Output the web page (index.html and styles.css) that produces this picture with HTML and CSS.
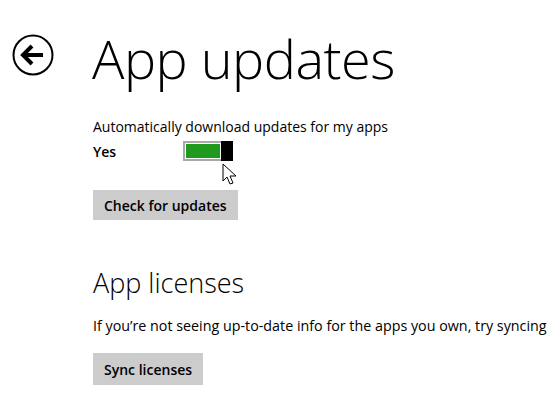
FILE: index.html
```html
<!DOCTYPE html>
<html>
<head>
    <link rel="stylesheet" href="styles.css">
</head>
<body>
    <div class="page-header">
        <button class="back-button" aria-label="Back">
            <svg width="42" height="42" viewBox="0 0 42 42">
                <circle cx="21" cy="21" r="19.5" fill="none" stroke="#000" stroke-width="2"/>
                <path d="M11 21 H31" stroke="#000" stroke-width="4" fill="none"/>
                <path d="M20 12 L11 21 L20 30" stroke="#000" stroke-width="4" fill="none" stroke-linejoin="miter"/>
            </svg>
        </button>
        <h1 class="page-title">App updates</h1>
    </div>

    <div class="content">
        <section class="setting">
            <div class="setting-label">Automatically download updates for my apps</div>
            <div class="toggle-row">
                <span class="toggle-state">Yes</span>
                <div class="toggle on">
                    <div class="toggle-track"><div class="toggle-fill"></div></div>
                    <div class="toggle-thumb"></div>
                    <!-- mouse pointer resting over the switch -->
                    <svg class="pointer" width="16" height="24" viewBox="0 0 16 24">
                        <path d="M1 1 L1 18 L5 14 L8 21 L11 20 L8 13 L14 13 Z" fill="#fff" stroke="#000" stroke-width="1" stroke-linejoin="round"/>
                    </svg>
                </div>
            </div>
            <button class="action-button">Check for updates</button>
        </section>

        <section class="setting licenses">
            <h2 class="section-title">App licenses</h2>
            <p class="section-text">If you’re not seeing up-to-date info for the apps you own, try syncing</p>
            <button class="action-button">Sync licenses</button>
        </section>
    </div>
</body>
</html>
```

FILE: styles.css
```css
body {
    margin: 0;
    background: #ffffff;
    color: #000;
    font-family: "Open Sans", "Liberation Sans", sans-serif;
    overflow: hidden;
}

.page-header {
    display: flex;
    align-items: flex-start;
    padding: 16px 0 0 12px;
    height: 70px;
}

.back-button {
    width: 42px;
    height: 42px;
    padding: 0;
    border: none;
    background: none;
    margin: 18px 38px 0 0;
}

.back-button svg {
    display: block;
}

.page-title {
    margin: 15px 0 0;
    font-size: 54px;
    font-weight: 300;
    letter-spacing: -0.5px;
    line-height: 1;
}

.content {
    padding: 32px 0 0 93px;
}

.setting-label {
    font-size: 14px;
    line-height: 18px;
}

.toggle-row {
    display: flex;
    align-items: center;
    height: 22px;
    margin-top: 4px;
}

.toggle-state {
    font-size: 14px;
    font-weight: 600;
    width: 90px;
}

.toggle {
    position: relative;
    display: flex;
    width: 50px;
    height: 20px;
}

.toggle-track {
    flex: 1;
    border: 2px solid #a8a8a8;
    border-right: none;
    padding: 1px;
    background: #fff;
}

.toggle-fill {
    height: 100%;
    background: #1f9a1f;
}

.toggle-thumb {
    width: 12px;
    background: #000;
}

.pointer {
    position: absolute;
    left: 39px;
    top: 22px;
}

.action-button {
    display: block;
    margin-top: 28px;
    padding: 0 11px;
    height: 30px;
    border: none;
    background: #cccccc;
    color: #000;
    font-family: "Open Sans", "Liberation Sans", sans-serif;
    font-size: 14px;
    font-weight: 600;
}

.licenses {
    margin-top: 46px;
}

.section-title {
    margin: 0;
    font-size: 27px;
    font-weight: 300;
    line-height: 34px;
}

.section-text {
    margin: 17px 0 0;
    font-size: 14.3px;
    line-height: 18px;
    white-space: nowrap;
}

.licenses .action-button {
    margin-top: 18px;
    height: 32px;
}
```
